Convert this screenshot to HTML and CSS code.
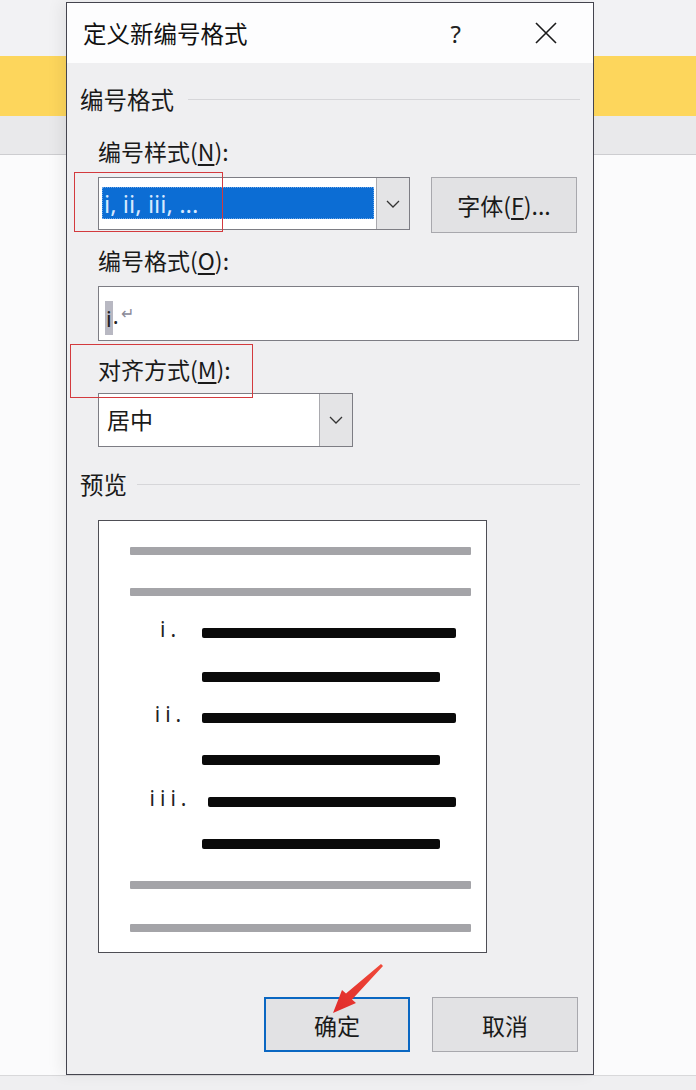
FILE: index.html
```html
<!DOCTYPE html>
<html lang="zh-CN">
<head>
<meta charset="utf-8">
<title>定义新编号格式</title>
<link rel="stylesheet" href="styles.css">
</head>
<body>
<div class="page">
  <div class="bg">
    <div class="bg-top"></div>
    <div class="bg-yellow"></div>
    <div class="bg-band"></div>
    <div class="bg-white"></div>
    <div class="bg-bottom"></div>
  </div>

  <div class="dialog">
    <div class="titlebar">
      <div class="title">定义新编号格式</div>
      <div class="help">?</div>
      <svg class="close" width="22" height="22" viewBox="0 0 22 22"><path d="M1 1 L21 21 M21 1 L1 21" stroke="#1a1a1a" stroke-width="1.6" fill="none"/></svg>
    </div>

    <div class="body">
      <div class="group-head"><span>编号格式</span><div class="rule"></div></div>

      <div class="indent">
        <div class="label">编号样式(<u>N</u>):</div>
        <div class="row-combo">
          <div class="combo combo-wide">
            <div class="combo-field"><div class="sel">i, ii, iii, ...</div></div>
            <div class="combo-arrow"><svg width="14" height="8" viewBox="0 0 14 8"><path d="M1 1 L7 7 L13 1" stroke="#333" stroke-width="1.3" fill="none"/></svg></div>
          </div>
          <div class="btn btn-font">字体(<u>F</u>)...</div>
        </div>

        <div class="label label-o">编号格式(<u>O</u>):</div>
        <div class="textbox"><span class="caret">i</span>.<span class="ret">↵</span></div>

        <div class="label label-m">对齐方式(<u>M</u>):</div>
        <div class="combo combo-narrow">
          <div class="combo-field"><div class="plain">居中</div></div>
          <div class="combo-arrow"><svg width="14" height="8" viewBox="0 0 14 8"><path d="M1 1 L7 7 L13 1" stroke="#333" stroke-width="1.3" fill="none"/></svg></div>
        </div>
      </div>

      <div class="group-head group-preview"><span>预览</span><div class="rule"></div></div>

      <div class="indent">
        <div class="preview">
          <div class="gline g1"></div>
          <div class="gline g2"></div>
          <div class="prow r1"><span class="num">i.</span><div class="bar long"></div></div>
          <div class="bar short b2"></div>
          <div class="prow r3"><span class="num">ii.</span><div class="bar long"></div></div>
          <div class="bar short b4"></div>
          <div class="prow r5"><span class="num">iii.</span><div class="bar long shift"></div></div>
          <div class="bar short b6"></div>
          <div class="gline g3"></div>
          <div class="gline g4"></div>
        </div>
      </div>

      <div class="buttons">
        <div class="btn btn-ok">确定</div>
        <div class="btn btn-cancel">取消</div>
      </div>
    </div>
  </div>

  <div class="mark mark1"></div>
  <div class="mark mark2"></div>
  <svg class="arrow" width="696" height="1090" viewBox="0 0 696 1090">
    <defs>
      <linearGradient id="ag" x1="0" y1="1" x2="1" y2="0">
        <stop offset="0" stop-color="#e02a2a"/>
        <stop offset="1" stop-color="#f04a3a"/>
      </linearGradient>
    </defs>
    <polygon points="333,1013 356,1003 352,999.5 383,966 381,964 346,993.5 342,990" fill="url(#ag)"/>
  </svg>
</div>
</body>
</html>
```

FILE: styles.css
```css
* { box-sizing: border-box; }
html, body { margin: 0; padding: 0; }
body {
  width: 696px;
  height: 1090px;
  overflow: hidden;
  font-family: "Noto Sans CJK SC", "Noto Sans", sans-serif;
  color: #1b1b1b;
}
.page { position: relative; width: 696px; height: 1090px; }

.bg { display: flex; flex-direction: column; height: 1090px; }
.bg-top { height: 56px; background: #f2f2f4; }
.bg-yellow { height: 60px; background: #fdd65c; }
.bg-band { height: 39px; background: #e9e9eb; border-bottom: 1px solid #cdcdd0; }
.bg-white { height: 920px; background: #fbfbfc; }
.bg-bottom { flex: 1; background: #efeff1; border-top: 1px solid #d8d8da; }

.dialog {
  position: absolute;
  left: 66px;
  top: 2px;
  width: 528px;
  height: 1073px;
  border: 1px solid #44444e;
  background: #efeff1;
  box-shadow: -6px 0 14px rgba(0,0,0,0.06);
  display: flex;
  flex-direction: column;
}

.titlebar {
  height: 60px;
  background: #fdfdfe;
  display: flex;
  align-items: center;
  padding-left: 16px;
}
.title { flex: 1; font-size: 23.5px; color: #111; }
.help { font-family: "Noto Sans", sans-serif; font-size: 24px; color: #222; margin-right: 74px; }
.close { margin-right: 36px; }

.body { padding: 0 13px; display: flex; flex-direction: column; }

.group-head {
  height: 30px;
  margin-top: 21px;
  display: flex;
  align-items: center;
  font-size: 23.5px;
  color: #1a1a1a;
}
.group-head .rule { flex: 1; height: 1px; background: #d6d6d9; margin-left: 14px; }
.group-preview { margin-top: 22px; }
.group-preview .rule { margin-left: 10px; }

.indent { padding-left: 18px; display: flex; flex-direction: column; }

.label {
  height: 28px;
  line-height: 28px;
  font-size: 23px;
  margin-top: 23px;
  color: #1a1a1a;
}
.label u { text-underline-offset: 3px; }
.label-o { margin-top: 13px; }
.label-m { margin-top: 14px; }

.row-combo { display: flex; margin-top: 12px; height: 56px; align-items: flex-start; }

.combo {
  display: flex;
  border: 1px solid #7d7d84;
  background: #fff;
}
.combo-wide { width: 312px; height: 53px; }
.combo-narrow { width: 255px; height: 54px; margin-top: 10px; }
.combo-field { flex: 1; padding: 9px 2px 0 3px; }
.combo-arrow {
  width: 33px;
  background: #e4e4e6;
  border-left: 1px solid #a9a9ae;
  display: flex;
  align-items: center;
  justify-content: center;
}
.sel {
  height: 32px;
  background: #0c6dd4;
  color: #d7e9ff;
  font-family: "Noto Sans", sans-serif;
  font-size: 24px;
  line-height: 31px;
  padding-left: 1px;
  border: 1px dotted #6aa6e8;
}
.plain { font-size: 23px; line-height: 33px; padding-left: 5px; color: #1a1a1a; }

.btn {
  background: #e2e2e4;
  border: 1px solid #a8a8ad;
  display: flex;
  align-items: center;
  justify-content: center;
  font-size: 23px;
  color: #1a1a1a;
}
.btn-font { width: 146px; height: 56px; margin-left: 21px; }
.btn-font u { text-underline-offset: 3px; }

.textbox {
  margin-top: 12px;
  width: 481px;
  height: 55px;
  background: #fff;
  border: 1px solid #7d7d84;
  font-family: "Noto Sans", sans-serif;
  font-size: 22px;
  line-height: 53px;
  padding-left: 6px;
  color: #222;
}
.caret { background: #b8b8c2; display: inline-block; line-height: 34px; padding: 0 1px; vertical-align: middle; }
.ret { font-size: 16px; color: #8a8a98; vertical-align: 5px; margin-left: 2px; }

.preview {
  margin-top: 21px;
  width: 389px;
  height: 433px;
  background: #fff;
  border: 1px solid #4e4e55;
  padding-top: 26px;
  display: flex;
  flex-direction: column;
}
.gline { height: 8px; width: 341px; margin-left: 31px; background: #a4a4a8; border-radius: 1px; }
.g2 { margin-top: 33px; }
.g3 { margin-top: 32px; }
.g4 { margin-top: 35px; }

.prow { display: flex; align-items: flex-end; height: 18px; }
.r1 { margin-top: 24px; }
.r3 { margin-top: 23px; }
.r5 { margin-top: 24px; }
.num {
  width: 64px;
  margin-left: 37px;
  text-align: center;
  font-family: "Noto Sans", sans-serif;
  font-size: 21px;
  line-height: 18px;
  letter-spacing: 5px;
  text-indent: 5px;
  color: #222;
}
.bar { height: 10px; background: #0a0a0a; border-radius: 2px; }
.prow .bar { margin-left: 2px; }
.long { width: 254px; }
.short { width: 238px; margin-left: 103px; }
.prow .shift { margin-left: 8px; width: 248px; }
.b2 { margin-top: 34px; }
.b4 { margin-top: 32px; }
.b6 { margin-top: 32px; }

.buttons { display: flex; justify-content: flex-end; margin-top: 44px; padding-right: 2px; gap: 22px; }
.btn-ok { width: 146px; height: 55px; border: 2px solid #0a67c2; }
.btn-cancel { width: 146px; height: 55px; }

.mark { position: absolute; border: 1.5px solid #d33a3e; }
.mark1 { left: 74px; top: 172px; width: 149px; height: 60px; }
.mark2 { left: 70px; top: 344px; width: 183px; height: 54px; }
.arrow { position: absolute; left: 0; top: 0; }
```
